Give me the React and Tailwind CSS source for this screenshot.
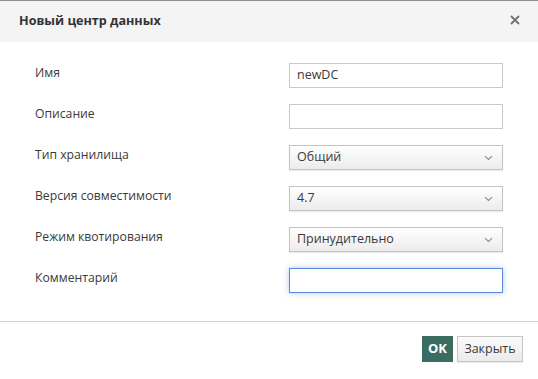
import React from "react";

function Chevron() {
  return (
    <svg width="9" height="6" viewBox="0 0 9 6" className="shrink-0">
      <path d="M1 1.2 L4.5 4.5 L8 1.2" fill="none" stroke="#8a8a8a" strokeWidth="1.1" />
    </svg>
  );
}

function TextInput({ value, focused }) {
  return (
    <div
      className={
        "h-[25px] w-[214px] bg-white flex items-center px-[7px] text-[12.5px] text-[#3a3a3a] " +
        (focused
          ? "border border-[#5b8ad6] shadow-[0_0_6px_rgba(91,138,214,0.45)]"
          : "border border-[#c9c9c9]")
      }
    >
      {value}
    </div>
  );
}

function Select({ value }) {
  return (
    <div className="h-[25px] w-[214px] flex items-center justify-between pl-[7px] pr-[9px] text-[12.5px] text-[#3a3a3a] border border-[#c4c4c4] bg-gradient-to-b from-[#ffffff] to-[#ececec] shadow-[0_1px_1px_rgba(0,0,0,0.08)]">
      <span>{value}</span>
      <Chevron />
    </div>
  );
}

function Row({ label, children }) {
  return (
    <div className="flex items-start justify-between">
      <div className="text-[12.2px] leading-[18px] text-[#3a3a3a] pt-[1px]">{label}</div>
      {children}
    </div>
  );
}

export default function App() {
  return (
    <div
      className="w-[538px] h-[379px] bg-white flex flex-col border-t border-[#8c8c8c]"
      style={{ fontFamily: '"Open Sans", "Noto Sans", sans-serif' }}
    >
      <div className="h-[41px] bg-[#f4f4f4] flex items-center justify-between pl-[19px] pr-[18px]">
        <div className="text-[12.6px] font-bold text-[#333]">Новый центр данных</div>
        <svg width="10" height="10" viewBox="0 0 10 10" className="mb-[3px]">
          <path d="M1 1 L9 9 M9 1 L1 9" stroke="#707070" strokeWidth="1.8" />
        </svg>
      </div>
      <div className="flex flex-col gap-[16px] pt-[21px] pl-[35px] pr-[35px] h-[279px]">
        <Row label="Имя"><TextInput value="newDC" /></Row>
        <Row label="Описание"><TextInput value="" /></Row>
        <Row label="Тип хранилища"><Select value="Общий" /></Row>
        <Row label="Версия совместимости"><Select value="4.7" /></Row>
        <Row label="Режим квотирования"><Select value="Принудительно" /></Row>
        <Row label="Комментарий"><TextInput value="" focused /></Row>
      </div>
      <div className="border-t border-[#d2d2d2] flex justify-end gap-[4px] pt-[14px] pr-[15px]">
        <button className="h-[26px] w-[31px] bg-[#3c6b60] text-white font-bold text-[13px] flex items-center justify-center">
          OK
        </button>
        <button className="h-[26px] w-[66px] border border-[#c6c6c6] bg-gradient-to-b from-[#fafafa] to-[#ebebeb] text-[#3a3a3a] text-[12.5px] flex items-center justify-center shadow-[0_1px_1px_rgba(0,0,0,0.08)]">
          Закрыть
        </button>
      </div>
    </div>
  );
}
